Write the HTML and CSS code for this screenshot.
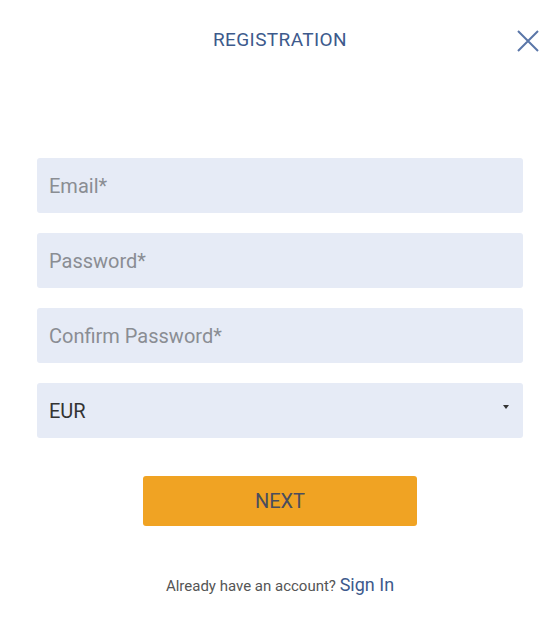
FILE: index.html
```html
<!DOCTYPE html>
<html lang="en">
<head>
    <meta charset="UTF-8" />
    <title>Registration</title>
    <link rel="stylesheet" href="styles.css">
</head>
<body>
    <div class="modal">
        <div class="modal-head">
            <h1>REGISTRATION</h1>
            <button class="close" aria-label="Close">
                <svg width="24" height="24" viewBox="0 0 24 24">
                    <path d="M2 2 L22 22 M22 2 L2 22" stroke="#5a76a8" stroke-width="2" fill="none" />
                </svg>
            </button>
        </div>

        <form class="form">
            <input type="text" class="field" placeholder="Email*" />
            <input type="password" class="field" placeholder="Password*" />
            <input type="password" class="field" placeholder="Confirm Password*" />
            <div class="field select">
                <span>EUR</span>
                <span class="caret"></span>
            </div>
            <button type="button" class="next">NEXT</button>
        </form>

        <p class="signin">Already have an account? <a href="#">Sign In</a></p>
    </div>
</body>
</html>
```

FILE: styles.css
```css
* {
    box-sizing: border-box;
}

body {
    margin: 0;
    background: #ffffff;
    font-family: Roboto, "Liberation Sans", Arial, sans-serif;
}

.modal {
    width: 560px;
    padding: 0 37px;
}

.modal-head {
    position: relative;
    height: 158px;
    padding-top: 28px;
    text-align: center;
}

.modal-head h1 {
    margin: 0;
    font-size: 19px;
    font-weight: 400;
    color: #3d5a8c;
    letter-spacing: 0.4px;
}

.close {
    position: absolute;
    top: 29px;
    right: -17px;
    width: 24px;
    height: 24px;
    padding: 0;
    border: none;
    background: none;
    cursor: pointer;
}

.form {
    display: flex;
    flex-direction: column;
    gap: 20px;
}

.field {
    width: 486px;
    height: 55px;
    padding: 0 12px;
    border: none;
    border-radius: 3px;
    background: #e6ebf6;
    font-family: inherit;
    font-size: 20px;
    color: #333;
    outline: none;
}

.field::placeholder {
    color: #8a8d93;
}

.select {
    display: flex;
    align-items: center;
    justify-content: space-between;
    margin-bottom: 18px;
}

.caret {
    width: 0;
    height: 0;
    margin-right: 2px;
    border-left: 3px solid transparent;
    border-right: 3px solid transparent;
    border-top: 4px solid #333;
    margin-top: -8px;
}

.next {
    align-self: center;
    width: 274px;
    height: 50px;
    border: none;
    border-radius: 3px;
    background: #f0a323;
    font-family: inherit;
    font-size: 20px;
    color: #4a4d5e;
    cursor: pointer;
}

.signin {
    margin: 48px 0 0;
    text-align: center;
    font-size: 15px;
    color: #555;
}

.signin a {
    font-size: 18px;
    color: #3d5a8c;
    text-decoration: none;
}
```
